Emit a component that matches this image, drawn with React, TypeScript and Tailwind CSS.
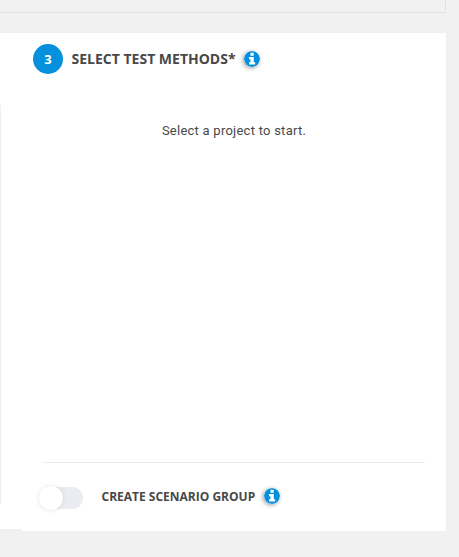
function InfoIcon() {
  return (
    <svg viewBox="0 0 16 16" className="block size-4 shrink-0 rounded-full shadow-[-1px_1px_4px_rgba(0,0,0,0.4)]" aria-hidden="true">
      <circle cx="8" cy="8" r="8" fill="#0490dc" />
      <path d="M6.5 1.8h3.2v2.9H6.5zM5 6h4.8v5.2h1.4v2.4H5v-2.4h1.4V8.2H5z" fill="white" />
    </svg>
  );
}

function Toggle() {
  return (
    <button
      type="button"
      role="switch"
      aria-checked="false"
      aria-label="Create scenario group"
      className="flex h-[22px] w-[43px] shrink-0 items-center rounded-full bg-[#ebecf1]"
    >
      <span className="-ml-px size-6 shrink-0 rounded-full bg-white shadow-[0_0_4px_rgba(0,0,0,0.12)]" />
    </button>
  );
}

export default function App() {
  return (
    <div className="flex h-[557px] w-[459px] flex-col overflow-hidden bg-[#f1f1f1] font-['Open_Sans',sans-serif] text-[#484848]">
      <div className="h-[13px] w-[446px] shrink-0 border-r border-b border-[#e2e2e2]" />
      <div className="mt-5 flex h-[498px] w-[446px] items-start">
        <div className="h-[496px] w-[22px] shrink-0 bg-white pt-[72px]">
          <div className="h-[399px] w-px bg-[#efefef]" />
        </div>
        <section className="flex h-full w-[424px] flex-col bg-white">
          <header className="flex items-center pt-[11px] pl-[11px]">
            <span className="flex size-[30px] items-center justify-center rounded-full bg-[#0490dc] pt-px text-[13px] font-bold text-white">
              3
            </span>
            <h2 className="ml-[8.5px] w-[164.5px] text-[14px] leading-5 font-bold whitespace-nowrap">SELECT TEST METHODS*</h2>
            <div className="ml-2 pb-px"><InfoIcon /></div>
          </header>
          <p className="mt-[47px] text-center font-[Roboto,sans-serif] text-[13px] leading-5 tracking-[0.25px]">
            Select a project to start.
          </p>
          <div className="mt-auto mr-[21px] ml-[21px] flex h-[69px] items-center border-t border-[#ebebeb]">
            <div className="-ml-[3px] mt-0.5"><Toggle /></div>
            <span className="ml-[18.5px] w-[154px] text-[12px] leading-5 font-bold whitespace-nowrap">CREATE SCENARIO GROUP</span>
            <div className="ml-2 pb-[3px]"><InfoIcon /></div>
          </div>
        </section>
      </div>
    </div>
  );
}
